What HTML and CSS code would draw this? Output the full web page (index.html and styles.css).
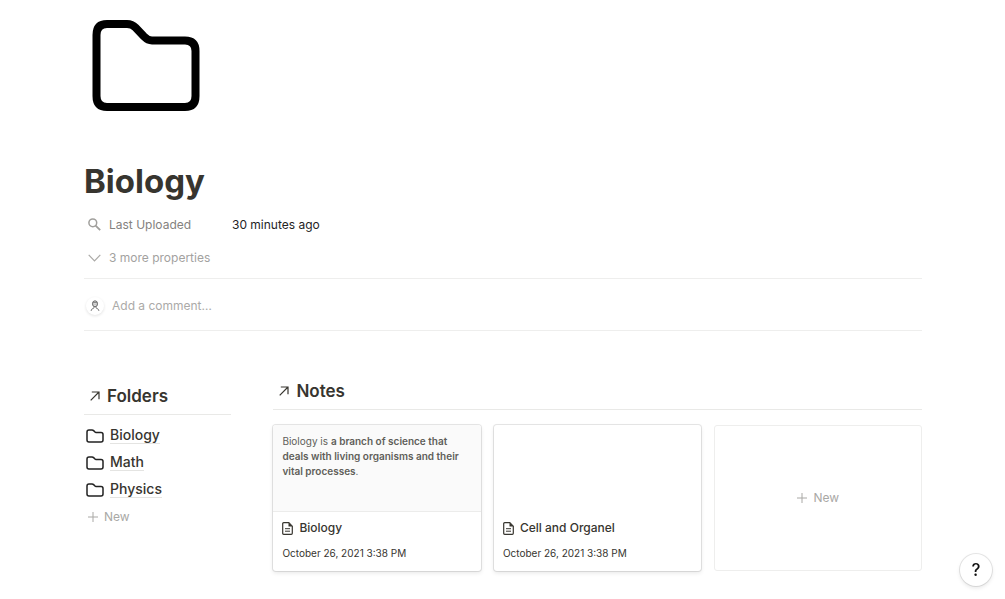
FILE: index.html
```html
<!DOCTYPE html>
<html lang="en">
<head>
	<meta charset="UTF-8">
	<meta name="viewport" content="width=device-width, initial-scale=1">
	<title>Biology</title>
	<link rel="stylesheet" href="styles.css">
</head>

<body>
	<svg class="defs" width="0" height="0" aria-hidden="true">
		<symbol id="folder" viewBox="0 0 18 14">
			<path d="M1 3 Q1 1 3 1 H6 Q7 1 7.600 1.600 L9 3 Q9.400 3.400 10 3.400 H15 Q17 3.400 17 5.400 V11 Q17 13 15 13 H3 Q1 13 1 11 Z" fill="none" stroke="#222" stroke-width="1.500"/>
		</symbol>
		<symbol id="arrow" viewBox="0 0 10 10">
			<path d="M0.700 9.300 L9 1 M1.800 1 H9 V8.200" fill="none" stroke="#37352f" stroke-width="1.200"/>
		</symbol>
		<symbol id="plus" viewBox="0 0 10 10">
			<path d="M5 0 V10 M0 5 H10" fill="none" stroke="currentColor" stroke-width="1"/>
		</symbol>
		<symbol id="note" viewBox="0 0 11 13">
			<path d="M2 0.700 H6.800 L10.300 4.200 V11.300 Q10.300 12.300 9.300 12.300 H1.700 Q0.700 12.300 0.700 11.300 V1.700 Q0.700 0.700 1.700 0.700 Z" fill="none" stroke="#37352f" stroke-width="1.200"/>
			<path d="M6.500 0.700 V4.500 H10.300 Z" fill="#37352f"/>
			<path d="M3 6.700 H8 M3 9.200 H8" stroke="#37352f" stroke-width="1"/>
		</symbol>
	</svg>

	<main class="page">
		<svg class="page-icon" viewBox="0 0 108 92" aria-hidden="true">
			<path d="M4.500 15 Q4.500 4 15 4 H35 Q40 4 43.500 7.500 L52 16.500 Q56 20.500 60 20.500 H93 Q103.500 20.500 103.500 31 V76 Q103.500 87 93 87 H15 Q4.500 87 4.500 76 Z" fill="none" stroke="#000" stroke-width="8"/>
		</svg>
		<h1 class="title">Biology</h1>

		<div class="property">
			<span class="property-name">
				<svg class="search" viewBox="0 0 13 13" aria-hidden="true"><circle cx="4.800" cy="4.800" r="3.900" fill="none" stroke="#a09f9c" stroke-width="1.500"/><path d="M7.600 7.600 L12.200 12.200" stroke="#a09f9c" stroke-width="1.800"/></svg>
				Last Uploaded
			</span>
			<span>30 minutes ago</span>
		</div>
		<button class="more" type="button">
			<svg class="chevron" viewBox="0 0 13 8" aria-hidden="true"><path d="M0.700 0.900 L6.500 6.900 L12.300 0.900" fill="none" stroke="#aaa9a6" stroke-width="1.200"/></svg>
			3 more properties
		</button>

		<div class="comment">
			<span class="avatar">
				<svg viewBox="0 0 10 12" aria-hidden="true">
					<ellipse cx="5" cy="3.800" rx="2.500" ry="3" fill="#ddd" stroke="#666" stroke-width="1"/>
					<path d="M2.500 3 Q5 1.500 7.500 3 M3.900 4.300 H4.300 M5.700 4.300 H6.100 M4 6.500 V8 L1.900 9 L1 11 M6 6.500 V8 L8.100 9 L9 11" fill="none" stroke="#777" stroke-width="0.900"/>
				</svg>
			</span>
			<input class="comment-input" type="text" placeholder="Add a comment…" aria-label="Add a comment">
		</div>

		<div class="columns">
			<section class="folders">
				<h2 class="heading"><svg class="arrow" aria-hidden="true"><use href="#arrow"/></svg>Folders</h2>
				<ul class="folder-list">
					<li><svg class="folder" aria-hidden="true"><use href="#folder"/></svg><a href="#">Biology</a></li>
					<li><svg class="folder" aria-hidden="true"><use href="#folder"/></svg><a href="#">Math</a></li>
					<li><svg class="folder" aria-hidden="true"><use href="#folder"/></svg><a href="#">Physics</a></li>
				</ul>
				<button class="new" type="button"><svg class="plus" aria-hidden="true"><use href="#plus"/></svg>New</button>
			</section>

			<section class="notes">
				<h2 class="heading"><svg class="arrow" aria-hidden="true"><use href="#arrow"/></svg>Notes</h2>
				<div class="cards">
					<a class="card" href="#">
						<div class="preview filled">Biology is <b>a branch of science that deals with living organisms and their vital processes</b>.</div>
						<div class="card-title"><svg class="note" aria-hidden="true"><use href="#note"/></svg>Biology</div>
						<div class="date">October 26, 2021 3:38 PM</div>
					</a>
					<a class="card" href="#">
						<div class="preview"></div>
						<div class="card-title"><svg class="note" aria-hidden="true"><use href="#note"/></svg>Cell and Organel</div>
						<div class="date">October 26, 2021 3:38 PM</div>
					</a>
					<button class="new-card" type="button"><svg class="plus" aria-hidden="true"><use href="#plus"/></svg>New</button>
				</div>
			</section>
		</div>
	</main>

	<button class="help" type="button" aria-label="Help">?</button>
</body>
</html>
```
FILE: styles.css
```css
* {
	box-sizing: border-box;
}
body {
	margin: 0;
	background: white;
	color: #37352f;
	font-family: Inter, "Liberation Sans", sans-serif;
	font-size: 12px;
	line-height: 16px;
}
button, input {
	font: inherit;
	border: none;
	background: none;
	padding: 0;
}
button {
	cursor: pointer;
}
a {
	color: inherit;
	text-decoration: none;
}
svg {
	display: block;
	flex: none;
}
.defs {
	position: absolute;
}
.page {
	padding: 20px 83px 24px 84px;
}
.page-icon {
	width: 108px;
	height: 92px;
	margin-left: 8px;
}
.title {
	margin: 48px 0 6px;
	font-size: 33px;
	line-height: 42px;
	font-weight: 700;
}

/* properties */
.property, .more {
	display: flex;
	align-items: center;
	height: 33px;
	padding-left: 4px;
}
.property {
	color: #24231f;
}
.property-name {
	display: flex;
	align-items: center;
	gap: 8px;
	width: 144px;
	color: #84827e;
}
.more {
	gap: 8px;
	color: #a3a29f;
}
.search {
	width: 13px;
	height: 13px;
}
.chevron {
	width: 13px;
	height: 8px;
}
.comment {
	display: flex;
	align-items: center;
	gap: 8px;
	height: 53px;
	margin-top: 4px;
	padding: 2px 0 0 2px;
	border-top: 1px solid #eeeeed;
	border-bottom: 1px solid #eeeeed;
}
.avatar {
	display: flex;
	align-items: center;
	justify-content: center;
	width: 18px;
	height: 18px;
	border-radius: 50%;
	box-shadow: 0 1px 3px rgba(15, 15, 15, 0.12);
}
.avatar svg {
	width: 10px;
	height: 12px;
}
.comment-input {
	flex: 1;
	outline: none;
}
.comment-input::placeholder {
	color: #abaaa8;
	opacity: 1;
}

/* folders and notes */
.columns {
	display: grid;
	grid-template-columns: 5fr 22fr;
	gap: 42px;
	margin-top: 48px;
}
.heading {
	display: flex;
	align-items: center;
	gap: 7px;
	margin: 0;
	padding: 0 0 6px 6px;
	border-bottom: 1px solid #e9e9e7;
	font-size: 17px;
	line-height: 24px;
	font-weight: 600;
}
.arrow {
	width: 10px;
	height: 10px;
}
.folders {
	padding-top: 5px;
}
.folder-list {
	list-style: none;
	margin: 7px 0 0;
	padding: 0 0 0 2px;
}
.folder-list li {
	display: flex;
	align-items: center;
	gap: 6px;
	height: 27px;
	font-size: 14px;
	font-weight: 500;
}
.folder-list a {
	border-bottom: 1px solid #e4e4e2;
}
.folder {
	width: 18px;
	height: 14px;
}
.plus {
	width: 10px;
	height: 10px;
}
.new, .new-card {
	display: flex;
	align-items: center;
	gap: 6px;
	color: #a9a8a5;
}
.new {
	height: 27px;
	padding-left: 4px;
}
.cards {
	display: grid;
	grid-template-columns: repeat(3, 1fr);
	gap: 13px;
	margin-top: 15px;
}
.card {
	overflow: hidden;
	border-radius: 3px;
	box-shadow: 0 0 0 1px rgba(15, 15, 15, 0.1), 0 2px 4px rgba(15, 15, 15, 0.1);
}
.preview {
	height: 87px;
	padding: 9px;
	color: #605e59;
	font-size: 10px;
	line-height: 15px;
}
.preview b {
	font-weight: 600;
}
.filled {
	background: #fafafa;
	border-bottom: 1px solid #ececeb;
}
.card-title {
	display: flex;
	align-items: center;
	gap: 6px;
	padding: 8px 9px 0;
	font-weight: 500;
}
.note {
	width: 11px;
	height: 13px;
}
.date {
	padding: 9px 9px 10px;
	font-size: 10px;
}
.new-card {
	justify-content: center;
	border: 1px solid #eeeeed;
	border-radius: 3px;
}
.help {
	position: fixed;
	right: 13px;
	bottom: 13px;
	width: 32px;
	height: 32px;
	border-radius: 50%;
	background: white;
	color: #111;
	font-size: 17px;
	font-weight: 500;
	box-shadow: 0 0 0 1px rgba(15, 15, 15, 0.1), 0 2px 4px rgba(15, 15, 15, 0.1);
}
```
